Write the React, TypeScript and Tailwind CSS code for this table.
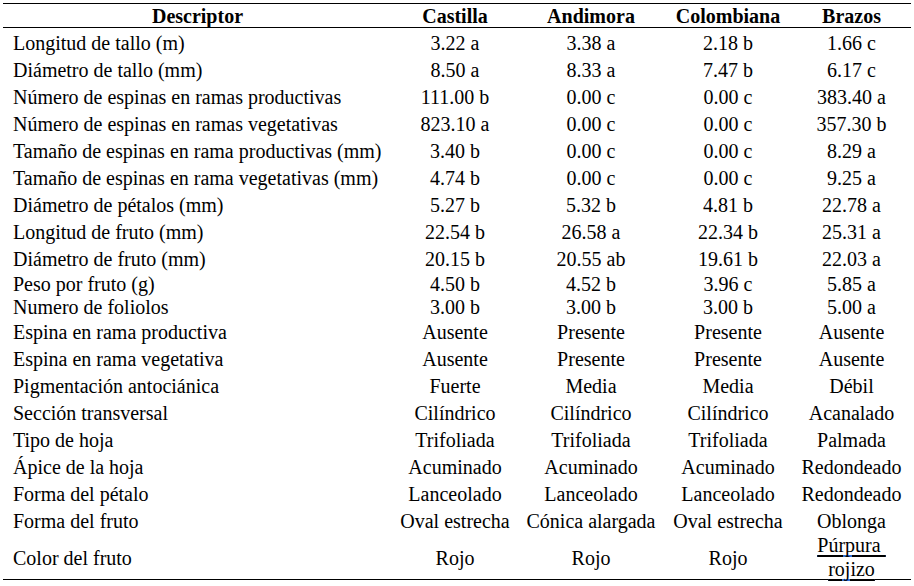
import React from "react";

type Row = {
  label: string;
  values: [string, string, string, string];
  h: string;
};

const rows: Row[] = [
  { label: "Longitud de tallo (m)", values: ["3.22 a", "3.38 a", "2.18 b", "1.66 c"], h: "h-[27px]" },
  { label: "Diámetro de tallo (mm)", values: ["8.50 a", "8.33 a", "7.47 b", "6.17 c"], h: "h-[27px]" },
  { label: "Número de espinas en ramas productivas", values: ["111.00 b", "0.00 c", "0.00 c", "383.40 a"], h: "h-[27px]" },
  { label: "Número de espinas en ramas vegetativas", values: ["823.10 a", "0.00 c", "0.00 c", "357.30 b"], h: "h-[27px]" },
  { label: "Tamaño de espinas en rama productivas (mm)", values: ["3.40 b", "0.00 c", "0.00 c", "8.29 a"], h: "h-[27px]" },
  { label: "Tamaño de espinas en rama vegetativas (mm)", values: ["4.74 b", "0.00 c", "0.00 c", "9.25 a"], h: "h-[27px]" },
  { label: "Diámetro de pétalos (mm)", values: ["5.27 b", "5.32 b", "4.81 b", "22.78 a"], h: "h-[27px]" },
  { label: "Longitud de fruto (mm)", values: ["22.54 b", "26.58 a", "22.34 b", "25.31 a"], h: "h-[27px]" },
  { label: "Diámetro de fruto (mm)", values: ["20.15 b", "20.55 ab", "19.61 b", "22.03 a"], h: "h-[27px]" },
  { label: "Peso por fruto (g)", values: ["4.50 b", "4.52 b", "3.96 c", "5.85 a"], h: "h-[23px]" },
  { label: "Numero de foliolos", values: ["3.00 b", "3.00 b", "3.00 b", "5.00 a"], h: "h-[24px]" },
  { label: "Espina en rama productiva", values: ["Ausente", "Presente", "Presente", "Ausente"], h: "h-[26px]" },
  { label: "Espina en rama vegetativa", values: ["Ausente", "Presente", "Presente", "Ausente"], h: "h-[27px]" },
  { label: "Pigmentación antociánica", values: ["Fuerte", "Media", "Media", "Débil"], h: "h-[27px]" },
  { label: "Sección transversal", values: ["Cilíndrico", "Cilíndrico", "Cilíndrico", "Acanalado"], h: "h-[27px]" },
  { label: "Tipo de hoja", values: ["Trifoliada", "Trifoliada", "Trifoliada", "Palmada"], h: "h-[27px]" },
  { label: "Ápice de la hoja", values: ["Acuminado", "Acuminado", "Acuminado", "Redondeado"], h: "h-[27px]" },
  { label: "Forma del pétalo", values: ["Lanceolado", "Lanceolado", "Lanceolado", "Redondeado"], h: "h-[27px]" },
  { label: "Forma del fruto", values: ["Oval estrecha", "Cónica alargada", "Oval estrecha", "Oblonga"], h: "h-[27px]" },
];

const cols = "grid grid-cols-[389px_126px_146px_128px_119px]";

export default function App() {
  return (
    <div
      className="w-[914px] h-[586px] bg-white text-black overflow-hidden"
      style={{ fontFamily: '"Liberation Serif", "Times New Roman", serif' }}
    >
      <div className="mt-[3px] ml-[3px] w-[908px] border-t border-b border-black text-[20px]">
        {/* header */}
        <div className={`${cols} h-[24px] border-b border-black pt-[2px] font-bold leading-[21px] items-center`}>
          <div className="text-center">Descriptor</div>
          <div className="text-center">Castilla</div>
          <div className="text-center">Andimora</div>
          <div className="text-center">Colombiana</div>
          <div className="text-center">Brazos</div>
        </div>
        <div className="h-px" />

        {rows.map((row) => (
          <div key={row.label} className={`${cols} ${row.h} items-center leading-[22px] whitespace-nowrap`}>
            <div className="pl-[10px]">{row.label}</div>
            {row.values.map((v, i) => (
              <div key={i} className="text-center">
                {v}
              </div>
            ))}
          </div>
        ))}

        {/* last row, wraps in Brazos */}
        <div className={`${cols} h-[45px] items-center leading-[22px] whitespace-nowrap`}>
          <div className="pl-[10px]">Color del fruto</div>
          <div className="text-center">Rojo</div>
          <div className="text-center">Rojo</div>
          <div className="text-center">Rojo</div>
          <div className="flex flex-col items-center leading-[23px] pt-[1px]">
            <span className="inline-block border-b-2 border-[#2f6fd6] leading-[20px] underline decoration-black underline-offset-[3px]">
              Púrpura&nbsp;
            </span>
            <span className="inline-block border-b-2 border-[#2f6fd6] leading-[20px] underline decoration-black underline-offset-[3px] mt-[2px]">
              rojizo
            </span>
          </div>
        </div>
      </div>
    </div>
  );
}
